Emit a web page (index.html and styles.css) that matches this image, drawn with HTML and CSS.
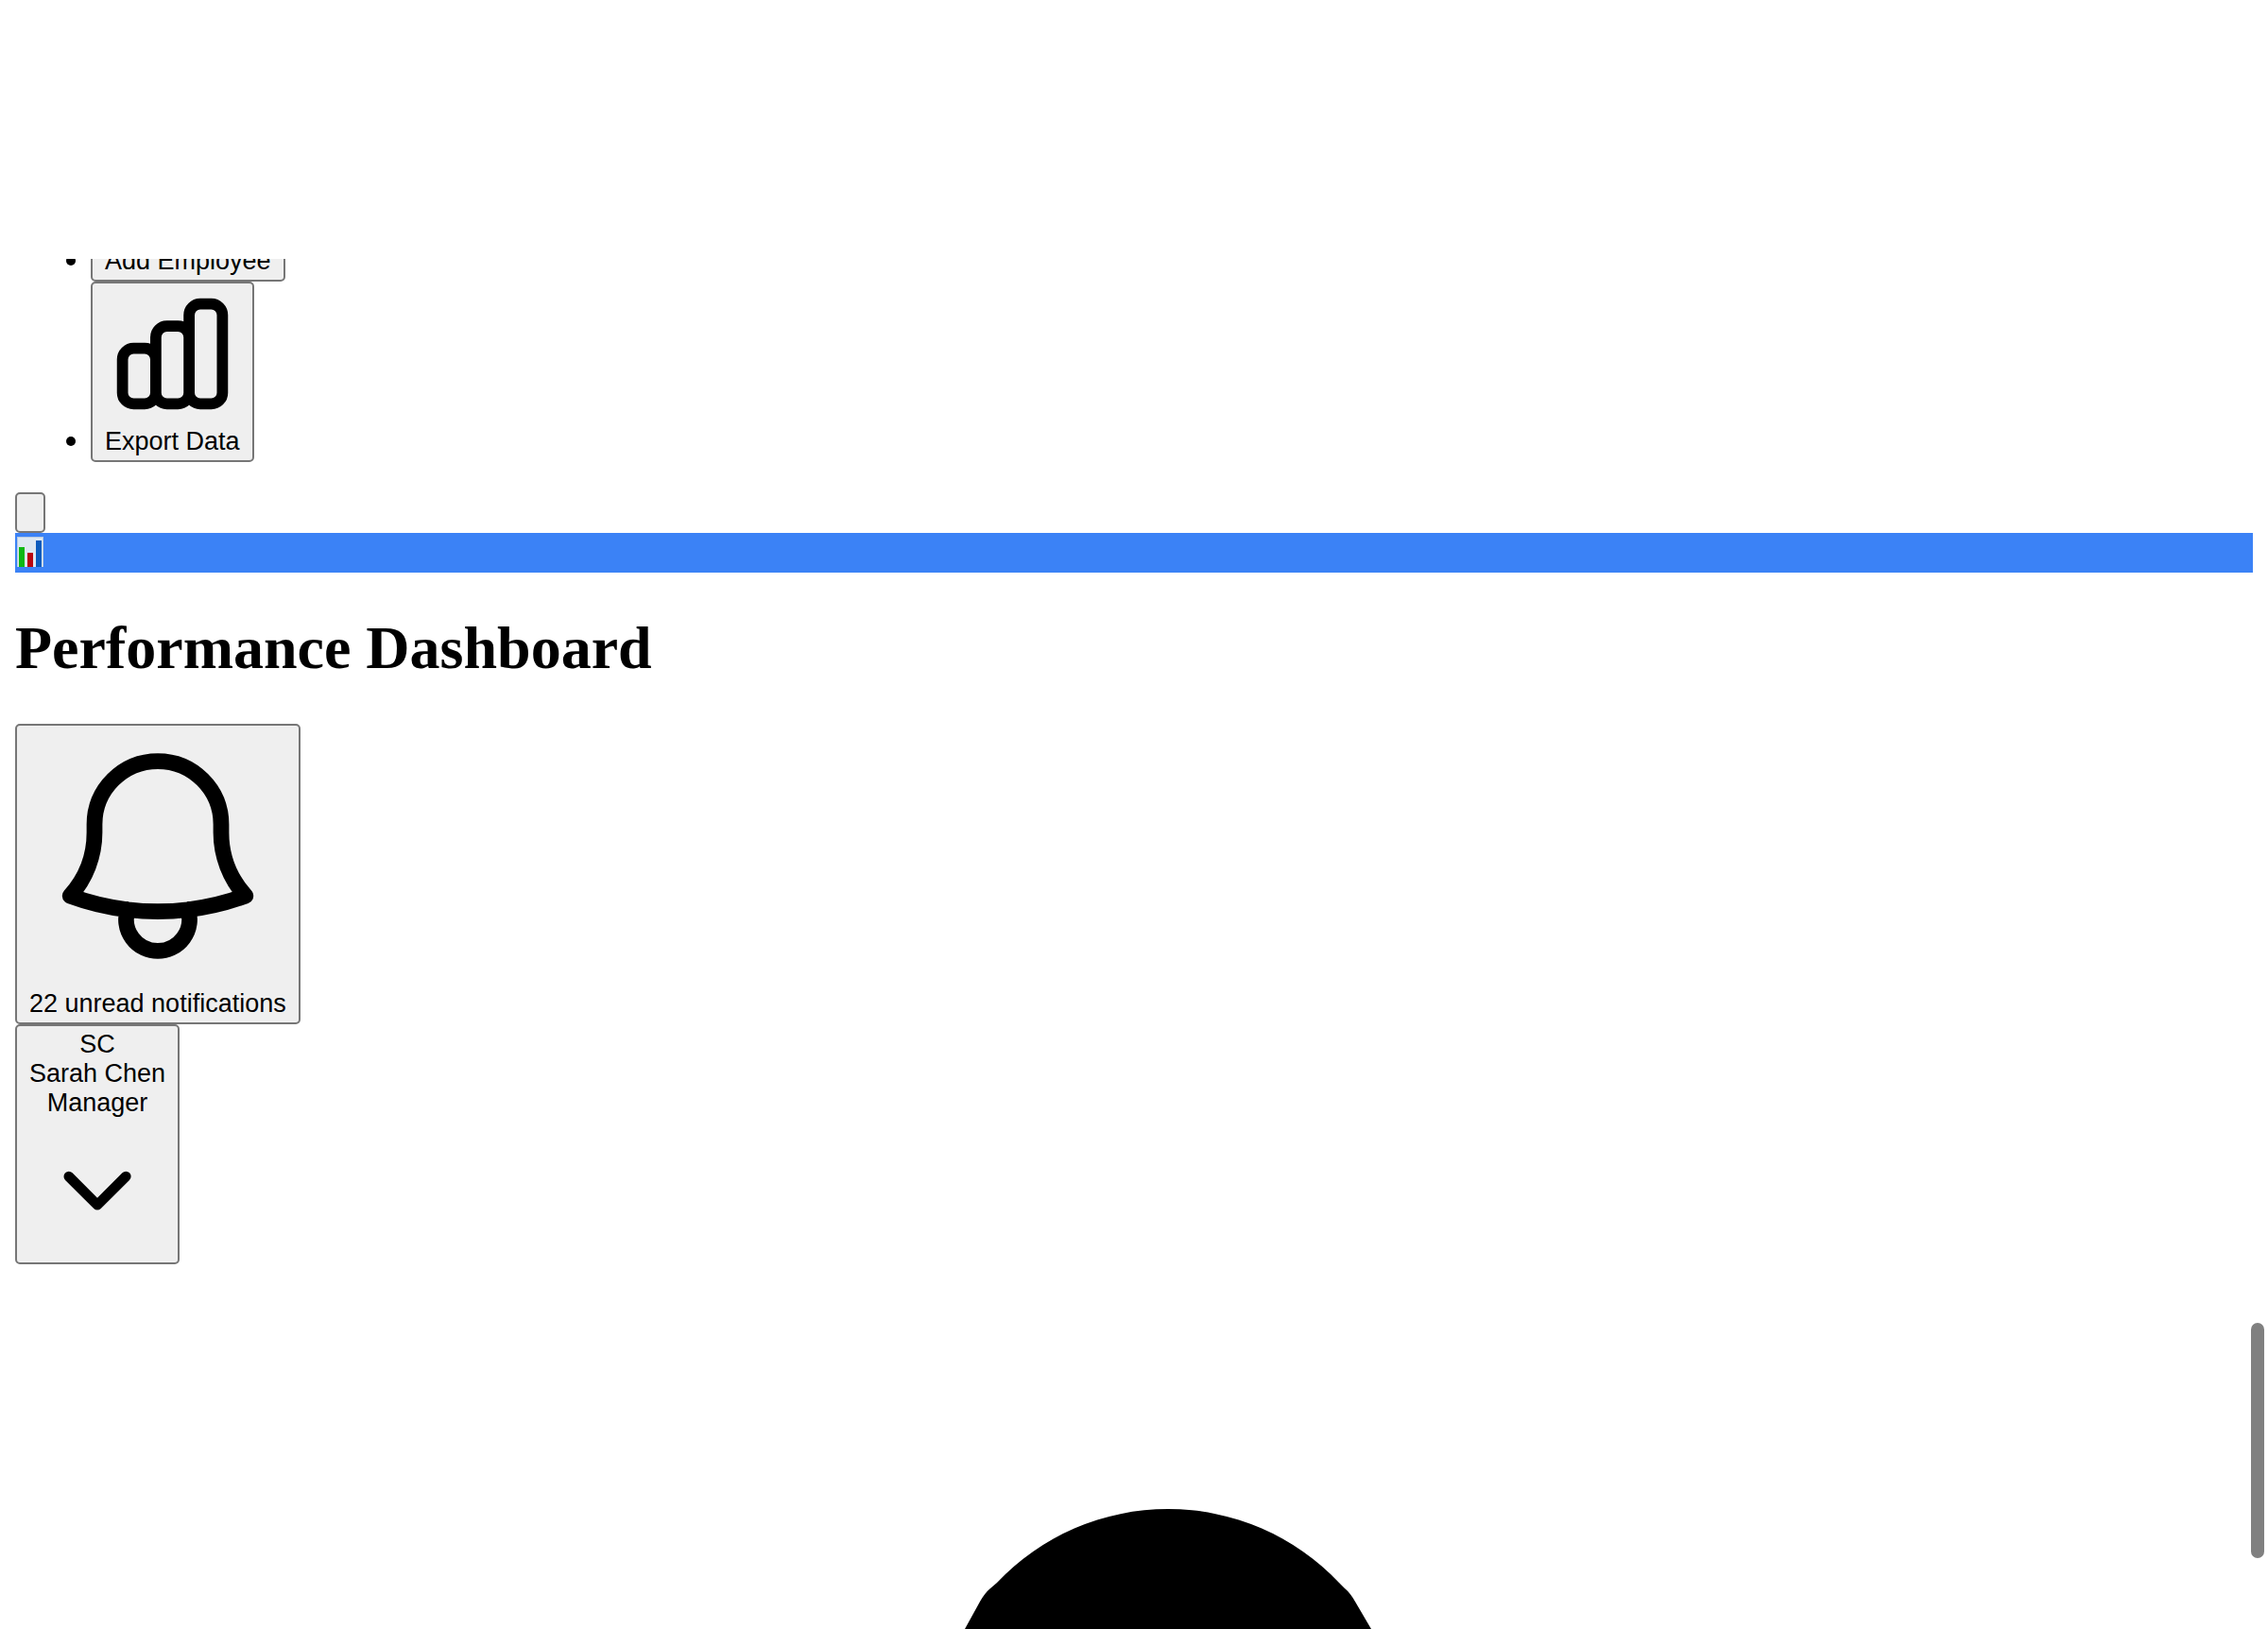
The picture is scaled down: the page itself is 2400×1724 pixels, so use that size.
FILE: index.html
```html
<!DOCTYPE html>
<html lang="en">
<head>
<meta charset="utf-8">
<title>Performance Dashboard</title>
<link rel="stylesheet" href="styles.css">
</head>
<body>
<nav class="actions" aria-label="Quick actions">
  <ul class="action-list">
    <li><button type="button" class="btn">Add Employee</button></li>
    <li><button type="button" class="btn">
      <svg class="btn-icon icon-chart" viewBox="0 0 24 24" fill="none" stroke="currentColor" stroke-width="2" stroke-linecap="round" stroke-linejoin="round" aria-hidden="true"><path d="M9 19v-6a2 2 0 00-2-2H5a2 2 0 00-2 2v6a2 2 0 002 2h2a2 2 0 002-2zm0 0V9a2 2 0 012-2h2a2 2 0 012 2v10m-6 0a2 2 0 002 2h2a2 2 0 002-2m0 0V5a2 2 0 012-2h2a2 2 0 012 2v14a2 2 0 01-2 2h-2a2 2 0 01-2-2z"/></svg>
      Export Data</button></li>
  </ul>
</nav>
<header>
  <button type="button" class="btn btn-menu" aria-label="Menu"></button>
  <div class="logo">
    <svg class="logo-icon" viewBox="0 0 28 32" aria-hidden="true">
      <rect width="28" height="32" fill="#b9cbe0"/>
      <rect x="1" y="1" width="26" height="31" fill="#dde8f2"/>
      <rect x="2" y="11" width="6" height="21" fill="#0cb814"/>
      <rect x="11" y="17" width="6" height="15" fill="#b80610"/>
      <rect x="20" y="4" width="6" height="28" fill="#0a5bbd"/>
    </svg>
  </div>
  <h1 class="title">Performance Dashboard</h1>
  <button type="button" class="btn">
    <svg class="btn-icon icon-bell" viewBox="0 0 24 24" fill="none" stroke="currentColor" stroke-width="1.5" stroke-linecap="round" stroke-linejoin="round" aria-hidden="true"><path d="M14.857 17.082a23.848 23.848 0 005.454-1.31A8.967 8.967 0 0118 9.75V9A6 6 0 006 9v.75a8.967 8.967 0 01-2.312 6.022c1.733.64 3.56 1.085 5.455 1.31m5.714 0a24.255 24.255 0 01-5.714 0m5.714 0a3 3 0 11-5.714 0"/></svg>
    22 unread notifications</button>
  <button type="button" class="btn">
    <span class="line">SC</span>
    <span class="line">Sarah Chen</span>
    <span class="line">Manager</span>
    <svg class="btn-icon icon-chevron" viewBox="0 0 20 20" fill="currentColor" aria-hidden="true"><path d="M5.22 8.22a.75.75 0 0 1 1.06 0L10 11.94l3.72-3.72a.75.75 0 1 1 1.06 1.06l-4.25 4.25a.75.75 0 0 1-1.06 0L5.22 9.28a.75.75 0 0 1 0-1.06Z"/></svg>
  </button>
</header>
<main class="content">
  <svg class="figure" viewBox="0 0 432 128" aria-hidden="true"><path d="M1 128L17 99Q22 90 28 85L35 79A249 249 0 01397 79L403 85Q409 90 414 99L431 128Z"/></svg>
</main>
<div class="scroll-thumb"></div>
</body>
</html>
```
FILE: styles.css
```css
html {
  height: 100%;
}

body {
  box-sizing: border-box;
  display: flex;
  flex-direction: column;
  min-height: 100%;
  margin: 0;
  padding: 274px 16px 0;
  background: #fff;
  color: #000;
  font: 32px "Liberation Serif", "Times New Roman", serif;
}

/* Only the end of the action list is in view */
.actions {
  display: flex;
  flex-direction: column;
  justify-content: flex-end;
  height: 215px;
  margin-bottom: 32px;
  overflow: hidden;
}

.action-list {
  margin: 0;
  padding-left: 80px;
}

.btn {
  box-sizing: border-box;
  display: block;
  min-height: 43px;
  margin: 0;
  padding: 4px 13px;
  border: 2px solid #767676;
  border-radius: 5px;
  background: #efefef;
  color: #000;
  font: 27px/31px "Liberation Sans", Arial, sans-serif;
  text-align: center;
}

.action-list .btn {
  display: inline-block;
}

.btn-menu {
  width: 32px;
}

.btn-icon {
  display: block;
  margin: 0 auto 7px;
}

.icon-chart {
  width: 141px;
}

.icon-bell {
  width: 268px;
}

.icon-chevron {
  width: 142px;
}

.line {
  display: block;
}

.logo {
  height: 42px;
  box-sizing: border-box;
  padding: 4px 2px;
  background: #3b82f6;
}

.logo-icon {
  display: block;
  width: 28px;
  height: 32px;
}

.title {
  margin: 43px 0;
  font-size: 64px;
  line-height: 74px;
}

.content {
  display: flex;
  flex: 1;
  align-items: flex-end;
  justify-content: center;
  padding-left: 72px;
}

.figure {
  display: block;
  width: 432px;
}

.scroll-thumb {
  position: fixed;
  right: 4px;
  top: 1400px;
  width: 14px;
  height: 249px;
  border-radius: 7px;
  background: #808080;
}
```
